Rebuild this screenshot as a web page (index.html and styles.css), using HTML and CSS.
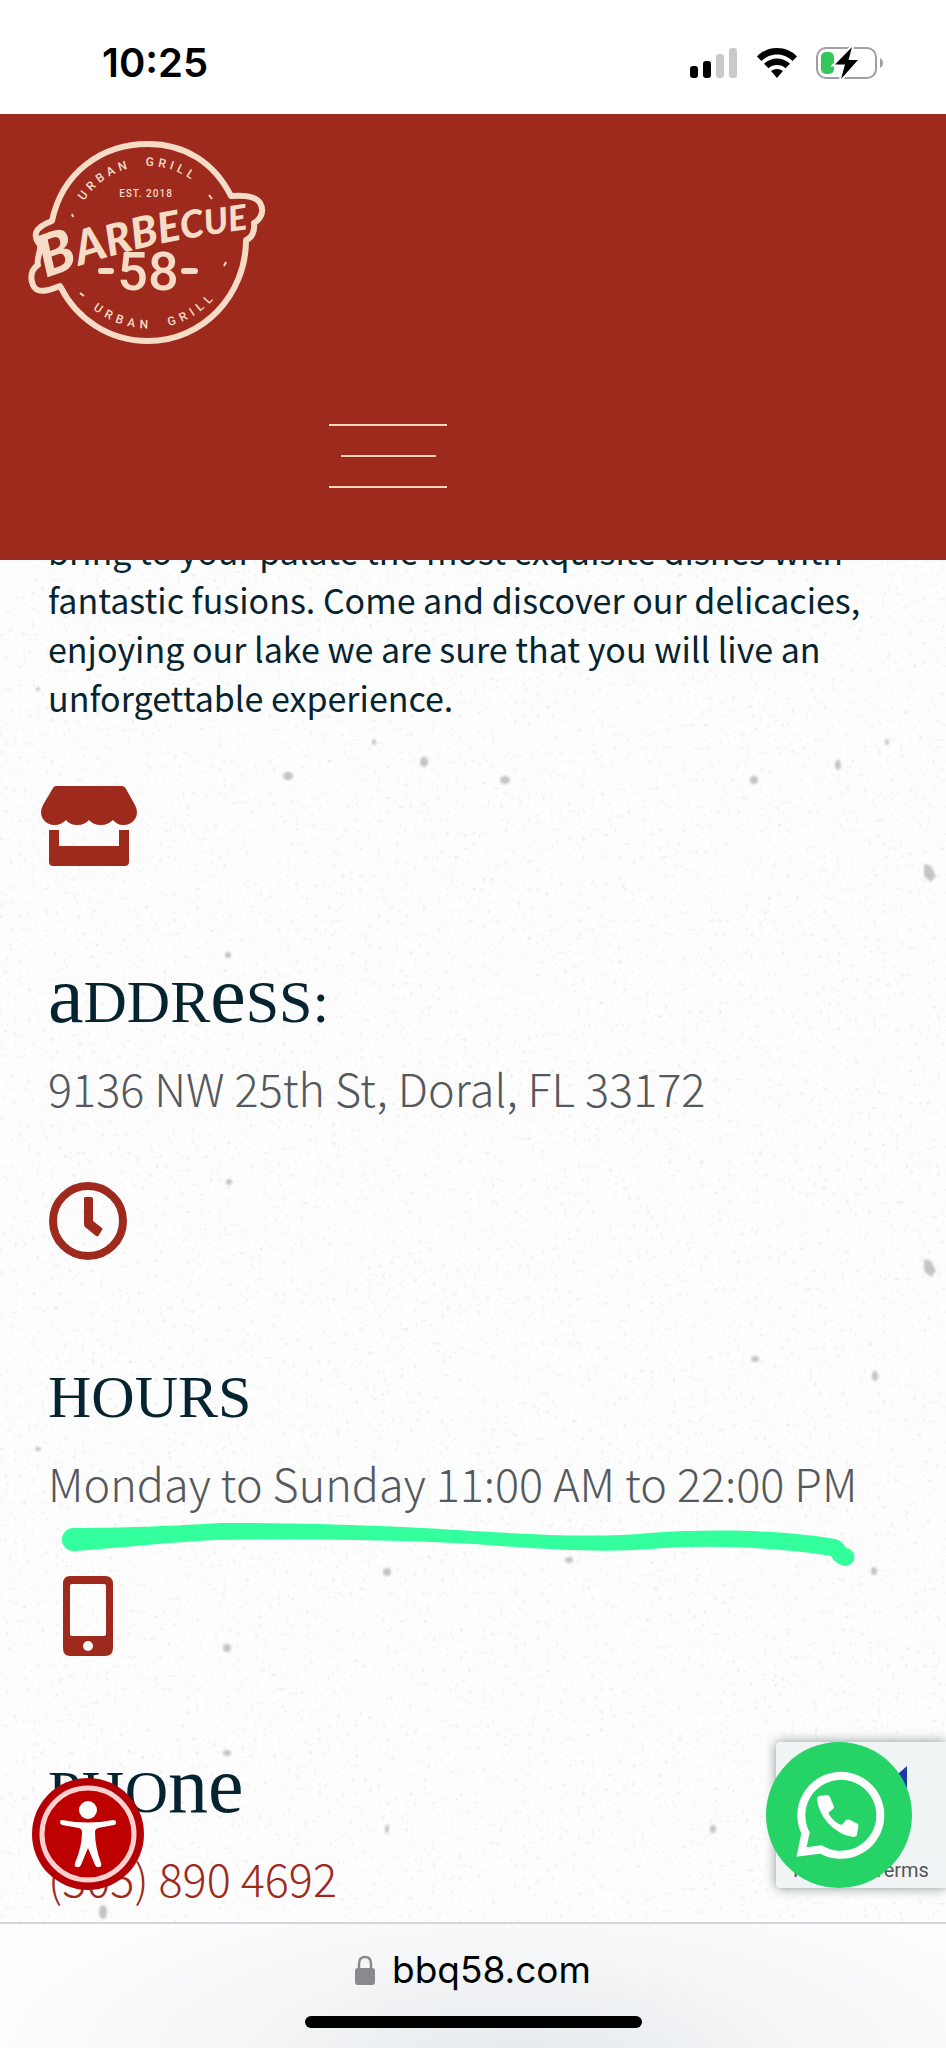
FILE: index.html
```html
<!DOCTYPE html>
<html lang="en">
<head>
<meta charset="utf-8">
<meta name="viewport" content="width=device-width, initial-scale=1">
<title>Barbecue 58</title>
<link rel="stylesheet" href="styles.css">
</head>
<body>
<div class="screen">
  <div class="status">
    <time class="clock">10:25</time>
    <div class="status-icons">
      <svg width="48" height="32" viewBox="0 0 48 32" aria-label="Signal">
        <rect x="0" y="19" width="8" height="12" rx="3"/>
        <rect x="13" y="14" width="8" height="17" rx="3"/>
        <rect x="26" y="7" width="8" height="24" rx="3" fill="#c9c9c9"/>
        <rect x="39" y="1" width="8" height="30" rx="3" fill="#c9c9c9"/>
      </svg>
      <svg width="42" height="32" viewBox="0 0 42 32" aria-label="Wi-Fi">
        <path d="M21 1C13 1 6 4 1 9.500l4.500 4.500C9.500 10 15 7.500 21 7.500S32.500 10 36.500 14L41 9.500C36 4 29 1 21 1Z"/>
        <path d="M21 11.500c-5 0-9.500 2-13 5.300l4.600 4.500c2.200-2 5.200-3.200 8.400-3.200s6.200 1.200 8.400 3.200l4.600-4.500c-3.500-3.300-8-5.300-13-5.300Z"/>
        <path d="M21 22c-2.200 0-4.300.8-5.900 2.100L21 31l5.900-6.900C25.300 22.800 23.200 22 21 22Z"/>
      </svg>
      <svg width="68" height="34" viewBox="0 0 68 34" aria-label="Battery charging">
        <rect x="1" y="2" width="59" height="30" rx="9" fill="none" stroke="#a0a0a0" stroke-width="2"/>
        <path d="M64 12c4 2 4 8 0 10Z" fill="#a0a0a0"/>
        <rect x="5" y="6" width="13" height="22" rx="5" fill="#34c759"/>
        <path d="M36 1 19 18.500H29L25 33l17-19h-9.500Z" stroke="#fff" stroke-width="4"/>
        <path d="M36 1 19 18.500H29L25 33l17-19h-9.500Z"/>
      </svg>
    </div>
  </div>

  <header class="site-header">
    <a class="logo" href="#" aria-label="Barbecue 58 home">
      <svg width="240" height="208" viewBox="28 140 240 208">
        <path class="logo-ring" d="M52 221C62 173 101 144 148 144C184 144 214 162 231 196C244 195 256 196 260 203C266 213 258 221 254 223C255 231 252 238 246 240C246 295 203 341 148 341C110 341 77 320 60 286C50 290 37 295 33 285C29 275 33 268 38 265C36 260 41 252 40 245C33 236 33 228 52 221Z"/>
        <defs>
          <path id="arc-top" d="M84 201A76 76 0 0 1 224 241"/>
          <path id="arc-bottom" d="M93 309A88 88 0 0 0 236 245"/>
          <path id="arc-name" d="M46 278Q85 263 130 251T256 228"/>
        </defs>
        <text class="logo-arc"><textPath href="#arc-top">URBAN&#160; GRILL</textPath></text>
        <text class="logo-arc wide"><textPath href="#arc-bottom">URBAN&#160; GRILL</textPath></text>
        <text class="logo-est" x="146" y="197">EST. 2018</text>
        <path class="logo-tick" d="M72 214l1 3M209 195l3 4M80 293l4 3M226 262l-2 4"/>
        <text class="logo-name"><textPath href="#arc-name"><tspan font-size="58">B</tspan><tspan font-size="47">A</tspan><tspan font-size="43">RB</tspan><tspan font-size="42">E</tspan><tspan font-size="38">C</tspan><tspan font-size="35">UE</tspan></textPath></text>
        <text class="logo-num" x="148" y="290">58</text>
        <path class="logo-dash" d="M101 271H111M184 271H195"/>
      </svg>
    </a>
    <button class="menu" type="button" aria-label="Open menu"><span></span><span></span><span></span></button>
  </header>

  <main class="content">
    <svg class="paper" aria-hidden="true">
      <filter id="grain" x="0" y="0" width="100%" height="100%">
        <feTurbulence type="fractalNoise" baseFrequency="0.22" numOctaves="3" seed="8"/>
        <feColorMatrix values="0 0 0 0 .5  0 0 0 0 .5  0 0 0 0 .5  2.400 0 0 0 -1.500"/>
      </filter>
      <filter id="soft"><feGaussianBlur stdDeviation="1"/></filter>
      <rect width="100%" height="100%" filter="url(#grain)" opacity=".4"/>
      <g fill="#c4c4c4" filter="url(#soft)">
        <ellipse cx="288" cy="216" rx="5" ry="4"/><ellipse cx="374" cy="182" rx="2" ry="3"/><ellipse cx="424" cy="202" rx="4" ry="5"/>
        <ellipse cx="505" cy="220" rx="5" ry="4"/><ellipse cx="754" cy="220" rx="4" ry="4"/><ellipse cx="838" cy="205" rx="3" ry="5"/><ellipse cx="887" cy="182" rx="2" ry="3"/>
        <path d="M924 304l7 2 5 10-5 6-7-6ZM924 699l7 2 5 10-5 6-7-6Z"/>
        <ellipse cx="38" cy="129" rx="2" ry="2"/><ellipse cx="228" cy="395" rx="3" ry="3"/><ellipse cx="229" cy="622" rx="3" ry="3"/>
        <ellipse cx="38" cy="889" rx="3" ry="2"/><ellipse cx="387" cy="1012" rx="4" ry="4"/><ellipse cx="755" cy="799" rx="4" ry="3"/><ellipse cx="875" cy="816" rx="3" ry="5"/>
        <ellipse cx="569" cy="1000" rx="4" ry="3"/><ellipse cx="874" cy="1011" rx="3" ry="4"/><ellipse cx="227" cy="1088" rx="4" ry="4"/><ellipse cx="227" cy="1193" rx="4" ry="3"/>
        <ellipse cx="713" cy="1269" rx="3" ry="4"/><ellipse cx="103" cy="1352" rx="4" ry="7"/><ellipse cx="387" cy="1269" rx="2" ry="4"/>
      </g>
    </svg>

    <p class="intro">bring to your palate the most exquisite dishes with<br>fantastic fusions. Come and discover our delicacies,<br>enjoying our lake we are sure that you will live an<br>unforgettable experience.</p>

    <section class="info">
      <svg class="icon store" width="96" height="80" viewBox="0 0 96 80" aria-hidden="true">
        <path d="M15 0H81Q83 0 84.500 2L94 19Q98 27 94 33Q90 39 82 39Q76 39 72 34Q67 39 60 39Q52 39 48 34Q44 39 36 39Q29 39 25 34Q20 39 14 39Q6 39 2 33Q-2 27 2 19L12 2Q13 0 15 0ZM8 44H18V60H78V44H88V76Q88 80 84 80H12Q8 80 8 76Z"/>
      </svg>
      <h2><span class="tall">a</span>DDR<span class="tall">e</span>SS:</h2>
      <p class="detail">9136 NW 25th St, Doral, FL 33172</p>
    </section>

    <section class="info">
      <svg class="icon" width="80" height="80" viewBox="0 0 80 80" aria-hidden="true">
        <circle cx="40" cy="40" r="35" fill="none" stroke="#9e2a1d" stroke-width="8"/>
        <path d="M37 16H43Q45 16 45 18V40L54 47Q55 48 54 49L51 54Q50 56 48 55L37 46Q36 45 36 43V18Q36 16 37 16Z"/>
      </svg>
      <h2>HOURS</h2>
      <p class="detail">Monday to Sunday 11:00 AM to 22:00 PM</p>
      <svg class="marker" width="800" height="50" viewBox="60 1520 800 50" aria-hidden="true">
        <path d="M72 1529C130 1529 190 1526 222 1524L250 1524C330 1525 400 1527 473 1532C540 1536 600 1539 650 1534C720 1529 790 1532 835 1540Q843 1542 846 1549A9 9 0 0 1 845 1567Q835 1565 831 1557C780 1549 710 1545 650 1550C600 1554 540 1550 473 1545C380 1540 290 1540 215 1541C170 1543 120 1549 75 1552A11.500 11.500 0 0 1 72 1529Z"/>
      </svg>
    </section>

    <section class="info">
      <svg class="icon" width="80" height="80" viewBox="0 0 80 80" aria-hidden="true">
        <path fill-rule="evenodd" d="M22 0H57Q65 0 65 8V72Q65 80 57 80H22Q15 80 15 72V8Q15 0 22 0ZM24 8Q22 8 22 10V58Q22 60 24 60H56Q58 60 58 58V10Q58 8 56 8ZM40 65A5 5 0 1 0 40 75A5 5 0 1 0 40 65Z"/>
      </svg>
      <h2>PHO<span class="tall">ne</span></h2>
      <p class="detail"><a href="tel:3058904692">(305) 890 4692</a></p>
    </section>

    <button class="access" type="button" aria-label="Accessibility options">
      <svg width="112" height="112" viewBox="0 0 112 112">
        <circle cx="56" cy="56" r="56" fill="#b30006"/>
        <circle cx="56" cy="56" r="46" fill="#bd0000" stroke="#ffd0d0" stroke-width="5"/>
        <g fill="#fff"><circle cx="56" cy="32" r="9"/>
        <path d="M30 42Q56 47 81 42Q84 42 84 44Q84 47 82 47L66 50Q63 51 63 54Q63 69 69 85Q70 89 67 89Q65 90 63 87L56 70L49 87Q47 90 45 89Q42 89 43 85Q50 69 50 54Q50 51 47 50L30 47Q28 46 28 44Q28 42 30 42Z"/></g>
      </svg>
    </button>

    <aside class="captcha">
      <svg width="60" height="60" viewBox="0 0 60 60" aria-hidden="true"><path d="M60 8V36L44 22Z" fill="#1c3aa9"/></svg>
      <span>Privacy - Terms</span>
    </aside>
    <a class="whatsapp" href="#" aria-label="Chat on WhatsApp">
      <svg width="146" height="146" viewBox="0 0 146 146">
        <circle cx="73" cy="73" r="73" fill="#25d366"/>
        <path fill="none" stroke="#fff" stroke-width="8" d="M35.500 110L39.500 91A39.500 39.500 0 1 1 55 107.500Z"/>
        <path fill="#fff" d="M53 54L60 53Q63 53 64 55L68 65Q68 67 63 70Q62 72 64 74Q69 81 76 83L80 78Q82 77 84 78L92 82Q93 83 92 86L91 92Q91 95 87 95Q73 93 62 81Q53 71 51 58Q51 55 53 54Z"/>
      </svg>
    </a>
  </main>

  <footer class="browser-bar">
    <div class="address">
      <svg width="20" height="30" viewBox="0 0 20 30" aria-hidden="true">
        <path d="M4 14V9Q4 2 10 2T16 9V14" fill="none" stroke="#8a8a8e" stroke-width="2.500"/>
        <rect y="13" width="20" height="17" rx="3" fill="#8a8a8e"/>
      </svg>
      <span>bbq58.com</span>
    </div>
    <div class="home-indicator"></div>
  </footer>
</div>
</body>
</html>
```
FILE: styles.css
```css
* { box-sizing: border-box; }
body { margin: 0; background: #fff; }
h2, p { margin: 0; }
svg { display: block; }
button { border: 0; padding: 0; background: none; cursor: pointer; }

.screen { display: flex; flex-direction: column; min-height: 100vh; overflow: hidden; }

.status {
  display: flex; justify-content: space-between; align-items: center;
  height: 114px; padding: 12px 62px 0 102px; background: #fff;
}
.clock { font: 600 40px/48px Inter, sans-serif; color: #000; }
.status-icons { display: flex; align-items: center; gap: 18px; }

.site-header {
  position: relative; z-index: 2;
  display: flex; flex-direction: column; align-items: flex-start;
  height: 446px; padding: 26px 28px; background: #9e2a1d;
}
.menu {
  display: flex; flex-direction: column; justify-content: space-between; align-items: center;
  width: 118px; height: 64px; margin: 76px 0 0 301px;
}
.menu span { width: 118px; height: 2px; background: #f6d5bd; }
.menu span:nth-child(2) { width: 95px; }

.logo-ring { fill: none; stroke: #f6dcc6; stroke-width: 6; stroke-linejoin: round; }
.logo text { fill: #f6dcc6; }
.logo-arc { font: 500 12px Roboto, sans-serif; letter-spacing: 4px; }
.logo-arc.wide { letter-spacing: 5px; }
.logo-est { font: 500 10px Roboto, sans-serif; letter-spacing: 1px; text-anchor: middle; }
.logo-name { font-family: Lato, sans-serif; font-weight: 900; font-style: italic; }
.logo-num { font: 500 54px Roboto, sans-serif; text-anchor: middle; }
.logo-tick { stroke: #f6dcc6; stroke-width: 2; }
.logo-dash { stroke: #f6dcc6; stroke-width: 6; stroke-linecap: round; }

.content {
  position: relative; flex: 1; overflow: hidden;
  padding: 0 48px 12px; background: #fdfdfd;
}
.paper { position: absolute; inset: 0; width: 100%; height: 100%; }

.intro {
  position: relative; margin-top: -34px;
  font: 400 34px/49px "Noto Sans CJK JP", sans-serif; color: #06242f;
}
.info { position: relative; min-height: 395px; }
.info:last-of-type { min-height: 0; }
.intro + .info { margin-top: 64px; }
.icon { fill: #9e2a1d; }
.store { margin-left: -7px; }
.info h2 {
  margin-top: 96px;
  font: 400 60px/80px "Liberation Serif", serif; color: #06242f;
}
.tall { font-size: 80px; line-height: 1px; }
.detail {
  margin-top: 14px;
  font: 300 45px/64px "Noto Sans CJK JP", sans-serif; color: #55585c;
}
.detail a { color: #9e2a1d; text-decoration: none; }
.marker { position: absolute; left: 12px; top: 338px; fill: #33ff9c; }

.access { position: absolute; left: 32px; bottom: 32px; }
.captcha {
  position: absolute; right: 0; bottom: 34px;
  display: flex; flex-direction: column; align-items: center; justify-content: space-between;
  width: 170px; height: 146px; padding: 16px 16px 6px;
  border-radius: 4px 0 0 4px; background: #f1f4f5; box-shadow: 0 0 12px #8b8f92;
  font: 400 20px/24px Roboto, sans-serif; color: #555; white-space: nowrap;
}
.captcha svg { margin-left: 32px; }
.whatsapp { position: absolute; right: 34px; bottom: 34px; }

.browser-bar {
  display: flex; flex-direction: column; align-items: center;
  height: 126px; padding-top: 22px; border-top: 2px solid #d3d6d8;
  background: radial-gradient(ellipse 55% 150% at 55% 110%, #e6eaec, #f5f7f8 60%, #fcfdfd);
}
.address { display: flex; align-items: center; gap: 17px; }
.address span { font: 400 37px/48px Inter, sans-serif; color: #000; }
.home-indicator { width: 337px; height: 12px; margin-top: 22px; border-radius: 6px; background: #000; }
```
